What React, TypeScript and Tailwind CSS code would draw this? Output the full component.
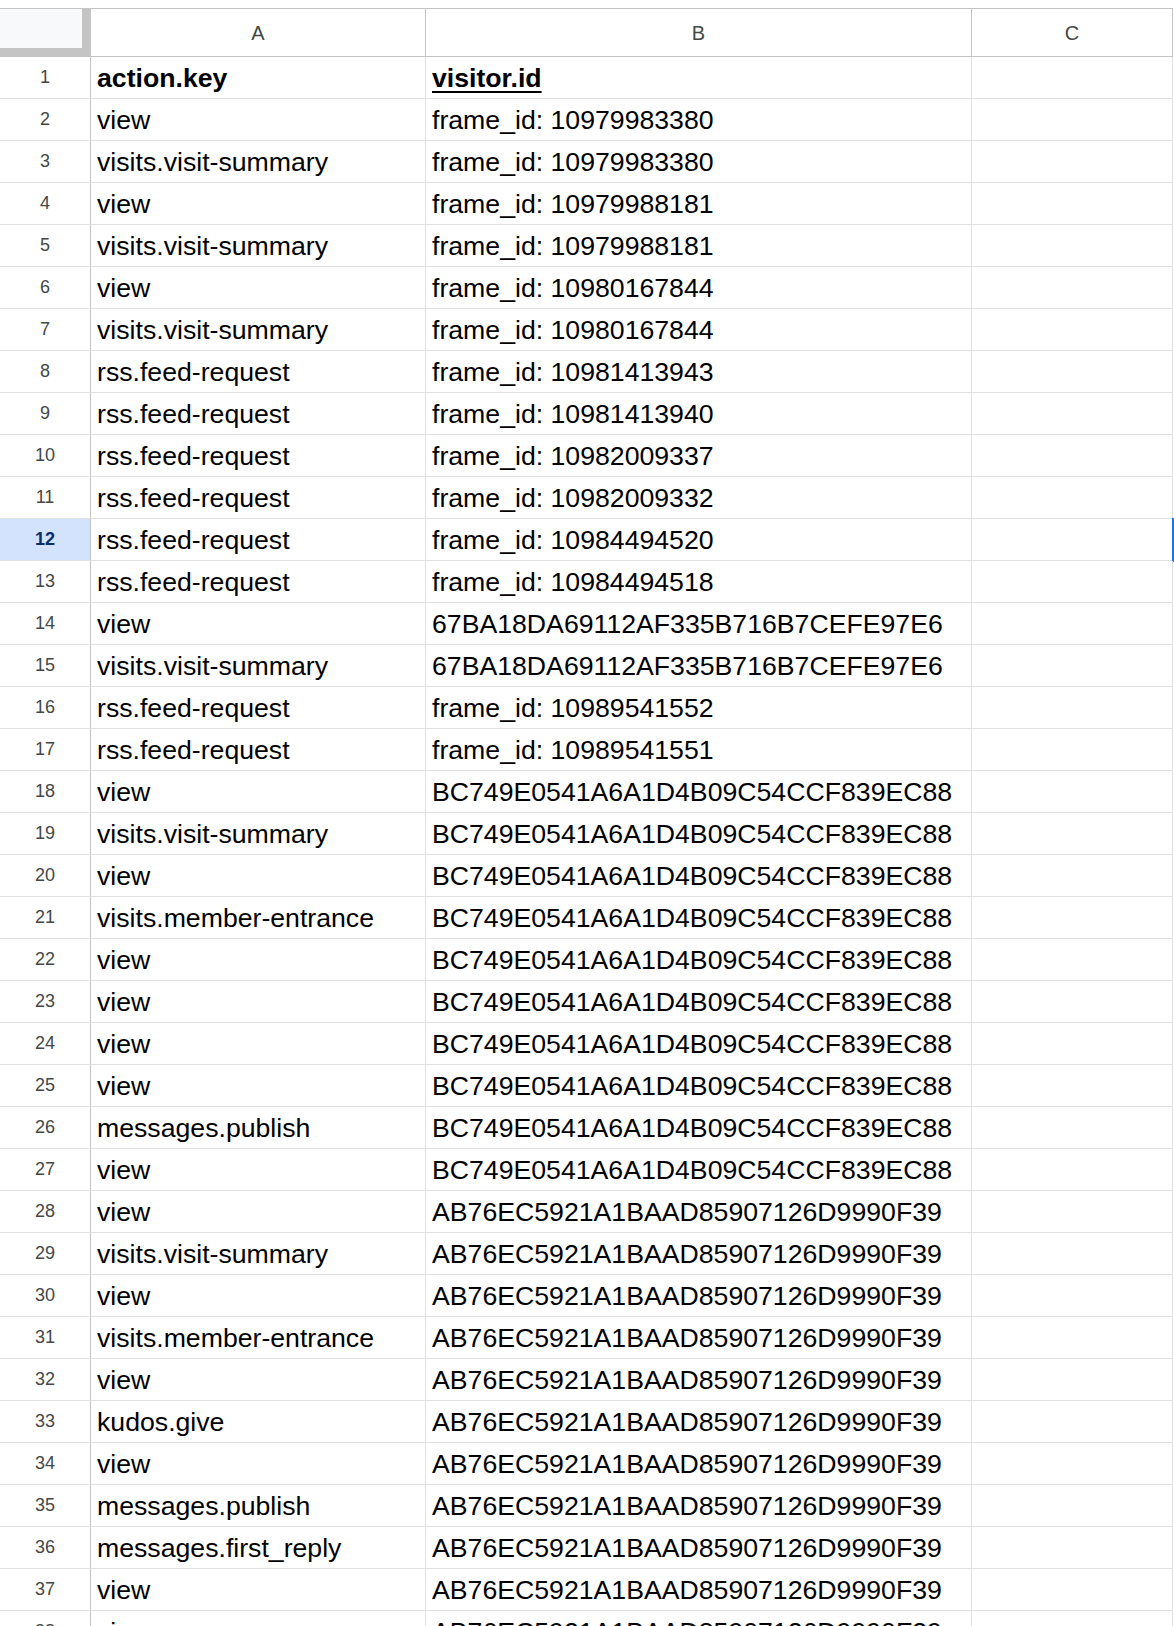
type Row = [string, string];

const BC = "BC749E0541A6A1D4B09C54CCF839EC88";
const AB = "AB76EC5921A1BAAD85907126D9990F39";
const SIX = "67BA18DA69112AF335B716B7CEFE97E6";

const rows: Row[] = [
  ["view", "frame_id: 10979983380"],
  ["visits.visit-summary", "frame_id: 10979983380"],
  ["view", "frame_id: 10979988181"],
  ["visits.visit-summary", "frame_id: 10979988181"],
  ["view", "frame_id: 10980167844"],
  ["visits.visit-summary", "frame_id: 10980167844"],
  ["rss.feed-request", "frame_id: 10981413943"],
  ["rss.feed-request", "frame_id: 10981413940"],
  ["rss.feed-request", "frame_id: 10982009337"],
  ["rss.feed-request", "frame_id: 10982009332"],
  ["rss.feed-request", "frame_id: 10984494520"],
  ["rss.feed-request", "frame_id: 10984494518"],
  ["view", SIX],
  ["visits.visit-summary", SIX],
  ["rss.feed-request", "frame_id: 10989541552"],
  ["rss.feed-request", "frame_id: 10989541551"],
  ["view", BC],
  ["visits.visit-summary", BC],
  ["view", BC],
  ["visits.member-entrance", BC],
  ["view", BC],
  ["view", BC],
  ["view", BC],
  ["view", BC],
  ["messages.publish", BC],
  ["view", BC],
  ["view", AB],
  ["visits.visit-summary", AB],
  ["view", AB],
  ["visits.member-entrance", AB],
  ["view", AB],
  ["kudos.give", AB],
  ["view", AB],
  ["messages.publish", AB],
  ["messages.first_reply", AB],
  ["view", AB],
  ["view", AB],
];

const SELECTED = 12;

function App() {
  return (
    <div className="h-[1626px] overflow-hidden bg-white pt-[8px] font-['Liberation_Sans',Arial,sans-serif] text-black">
      {/* column headers */}
      <div className="flex w-[1173px] border-t border-[#c4c4c4]">
        <div className="w-[91px] h-[48px] bg-[#f8f9fa] border-r-[9px] border-b-[9px] border-[#c4c4c4]" />
        <div className="w-[335px] h-[48px] border-r border-b border-[#c4c4c4] flex items-center justify-center text-[20px] text-[#444746]">
          A
        </div>
        <div className="w-[546px] h-[48px] border-r border-b border-[#c4c4c4] flex items-center justify-center text-[20px] text-[#444746]">
          B
        </div>
        <div className="w-[201px] h-[48px] border-r border-b border-[#c4c4c4] flex items-center justify-center text-[20px] text-[#444746]">
          C
        </div>
      </div>

      {/* header row */}
      <div className="flex w-[1173px] h-[42px]">
        <div className="w-[91px] border-r border-r-[#c4c4c4] border-b border-b-[#e1e1e1] flex items-center justify-center text-[18px] text-[#444746]">
          1
        </div>
        <div className="w-[335px] border-r border-b border-[#e1e1e1] flex items-end px-[6px] pb-[5px] text-[26.67px] leading-[30px] font-bold">
          action.key
        </div>
        <div className="w-[546px] border-r border-b border-[#e1e1e1] flex items-end px-[6px] pb-[5px] text-[26.67px] leading-[30px] font-bold">
          <span className="underline decoration-2 underline-offset-[4px]">visitor.id</span>
        </div>
        <div className="w-[201px] border-r border-b border-[#e1e1e1]" />
      </div>

      {rows.map(([a, b], i) => {
        const n = i + 2;
        const sel = n === SELECTED;
        return (
          <div key={n} className="relative flex w-[1173px] h-[42px]">
            <div
              className={
                sel
                  ? "w-[91px] border-r border-r-[#c4c4c4] border-b border-b-[#e1e1e1] bg-[#d3e3fd] flex items-center justify-center text-[18px] font-bold text-[#0b2d6b]"
                  : "w-[91px] border-r border-r-[#c4c4c4] border-b border-b-[#e1e1e1] flex items-center justify-center text-[18px] text-[#444746]"
              }
            >
              {n}
            </div>
            <div className="w-[335px] border-r border-b border-[#e1e1e1] flex items-end px-[6px] pb-[5px] text-[26.67px] leading-[30px] whitespace-nowrap">
              {a}
            </div>
            <div className="w-[546px] border-r border-b border-[#e1e1e1] flex items-end px-[6px] pb-[5px] text-[26.67px] leading-[30px] whitespace-nowrap">
              {b}
            </div>
            <div className="w-[201px] border-r border-b border-[#e1e1e1]" />
            {sel && <div className="absolute left-[1172px] top-[-1px] w-[2px] h-[44px] bg-[#1a73e8]" />}
          </div>
        );
      })}
    </div>
  );
}

export default App;
